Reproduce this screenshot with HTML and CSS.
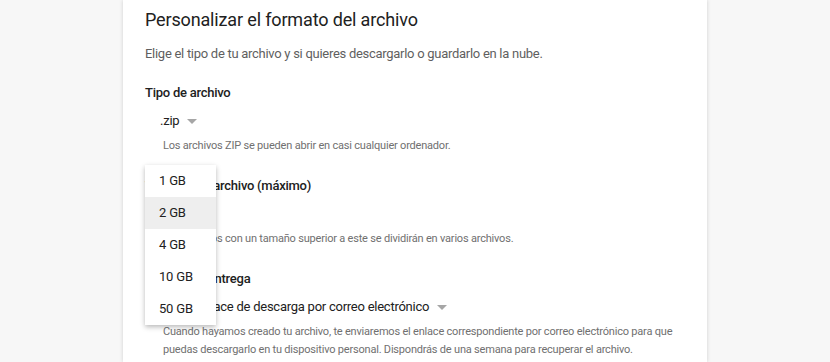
FILE: index.html
```html
<!DOCTYPE html>
<html lang="es">
<head>
<meta charset="utf-8">
<link rel="stylesheet" href="styles.css">
</head>
<body>
<div class="card">
  <h1 class="title">Personalizar el formato del archivo</h1>
  <p class="subtitle">Elige el tipo de tu archivo y si quieres descargarlo o guardarlo en la nube.</p>

  <h2 class="label">Tipo de archivo</h2>
  <div class="select"><span>.zip</span><span class="arrow"></span></div>
  <p class="hint">Los archivos ZIP se pueden abrir en casi cualquier ordenador.</p>

  <h2 class="label label-gap">Tamaño del archivo (máximo)</h2>
  <div class="select"><span>2 GB</span><span class="arrow"></span></div>
  <p class="hint">Los archivos con un tamaño superior a este se dividirán en varios archivos.</p>

  <h2 class="label label-gap">Método de entrega</h2>
  <div class="select"><span>Enviar enlace de descarga por correo electrónico</span><span class="arrow"></span></div>
  <p class="hint">Cuando hayamos creado tu archivo, te enviaremos el enlace correspondiente por correo electrónico para que puedas descargarlo en tu dispositivo personal. Dispondrás de una semana para recuperar el archivo.</p>

  <ul class="menu">
    <li class="menu-item">1 GB</li>
    <li class="menu-item is-active">2 GB</li>
    <li class="menu-item">4 GB</li>
    <li class="menu-item">10 GB</li>
    <li class="menu-item">50 GB</li>
  </ul>
</div>
</body>
</html>
```

FILE: styles.css
```css
html, body {
  margin: 0;
  padding: 0;
  background: #f7f7f7;
  font-family: Roboto, "Liberation Sans", Arial, sans-serif;
  color: #222;
  overflow: hidden;
}

.card {
  position: relative;
  box-sizing: border-box;
  margin-left: 123px;
  width: 584px;
  min-height: 362px;
  padding: 6px 10px 0 22px;
  background: #fff;
  box-shadow: 0 0 4px rgba(0, 0, 0, 0.16);
}

.title {
  margin: 0;
  font-size: 18px;
  line-height: 28px;
  letter-spacing: -0.15px;
  font-weight: 400;
  color: #212121;
}

.subtitle {
  margin: 10px 0 0;
  font-size: 13px;
  line-height: 20px;
  letter-spacing: -0.28px;
  color: #5f5f5f;
}

.label {
  margin: 19px 0 0;
  font-size: 13px;
  line-height: 20px;
  letter-spacing: -0.25px;
  font-weight: 500;
  color: #212121;
}

.label-gap {
  margin-top: 21px;
}

.select {
  display: flex;
  align-items: center;
  gap: 8px;
  margin-top: 8px;
  padding-left: 15px;
  font-size: 13px;
  line-height: 20px;
  letter-spacing: -0.25px;
  color: #212121;
}

.arrow {
  width: 0;
  height: 0;
  border-left: 5px solid transparent;
  border-right: 5px solid transparent;
  border-top: 5px solid #a6a6a6;
  margin-top: 1px;
}

.hint {
  margin: 6px 0 0;
  padding-left: 18px;
  font-size: 11px;
  line-height: 18px;
  letter-spacing: -0.2px;
  color: #707070;
}

.menu {
  position: absolute;
  top: 165px;
  left: 22px;
  width: 71px;
  margin: 0;
  padding: 0;
  list-style: none;
  background: #fff;
  box-shadow: 0 2px 5px rgba(0, 0, 0, 0.28);
}

.menu-item {
  height: 32px;
  line-height: 32px;
  padding-left: 14px;
  font-size: 13px;
  letter-spacing: -0.2px;
  color: #212121;
}

.menu-item.is-active {
  background: #eeeeee;
}
```
